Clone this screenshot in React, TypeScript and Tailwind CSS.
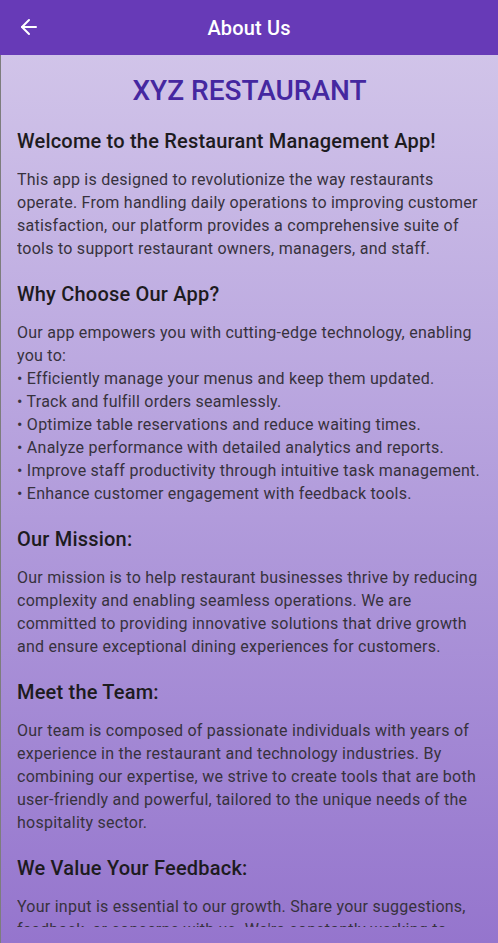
import { ArrowLeft } from "lucide-react";

const sections = [
  {
    title: "Welcome to the Restaurant Management App!",
    lines: [
      "This app is designed to revolutionize the way restaurants operate. From handling daily operations to improving customer satisfaction, our platform provides a comprehensive suite of tools to support restaurant owners, managers, and staff.",
    ],
  },
  {
    title: "Why Choose Our App?",
    lines: [
      "Our app empowers you with cutting-edge technology, enabling you to:",
      "• Efficiently manage your menus and keep them updated.",
      "• Track and fulfill orders seamlessly.",
      "• Optimize table reservations and reduce waiting times.",
      "• Analyze performance with detailed analytics and reports.",
      "• Improve staff productivity through intuitive task management.",
      "• Enhance customer engagement with feedback tools.",
    ],
  },
  {
    title: "Our Mission:",
    lines: [
      "Our mission is to help restaurant businesses thrive by reducing complexity and enabling seamless operations. We are committed to providing innovative solutions that drive growth and ensure exceptional dining experiences for customers.",
    ],
  },
  {
    title: "Meet the Team:",
    lines: [
      "Our team is composed of passionate individuals with years of experience in the restaurant and technology industries. By combining our expertise, we strive to create tools that are both user-friendly and powerful, tailored to the unique needs of the hospitality sector.",
    ],
  },
  {
    title: "We Value Your Feedback:",
    lines: [
      "Your input is essential to our growth. Share your suggestions, feedback, or concerns with us. We're constantly working to improve our app and make it the best tool for your restaurant.",
    ],
  },
];

export default function App() {
  return (
    <div className="h-[943px] w-[498px] flex flex-col overflow-hidden font-['Roboto',sans-serif]">
      {/* app bar */}
      <header className="h-[55px] shrink-0 bg-[#673ab7] flex items-center relative">
        <button className="absolute left-[17px] top-[15px] text-white">
          <ArrowLeft size={24} strokeWidth={2} />
        </button>
        <h1 className="w-full text-center text-white text-[20px] font-medium tracking-[0.15px]">
          About Us
        </h1>
      </header>

      <main className="flex-1 min-h-0 border-l border-[#7d7d7d] bg-gradient-to-b from-[#d1c4e9] to-[#9575cd] p-4">
        <div className="h-full overflow-hidden">
          <h2 className="text-center text-[28px] leading-[40px] font-medium text-[#4527a0] mb-[18px]">
            XYZ RESTAURANT
          </h2>

          {sections.map((s) => (
            <section key={s.title} className="mb-[22px]">
              <h3 className="text-[20px] leading-[24px] font-medium tracking-[0.2px] text-[#1d1b20] mb-[15px]">
                {s.title}
              </h3>
              {s.lines.map((l) => (
                <p key={l} className="text-[16px] leading-[23px] tracking-[0.25px] text-[#37323d]">
                  {l}
                </p>
              ))}
            </section>
          ))}
        </div>
      </main>
    </div>
  );
}
